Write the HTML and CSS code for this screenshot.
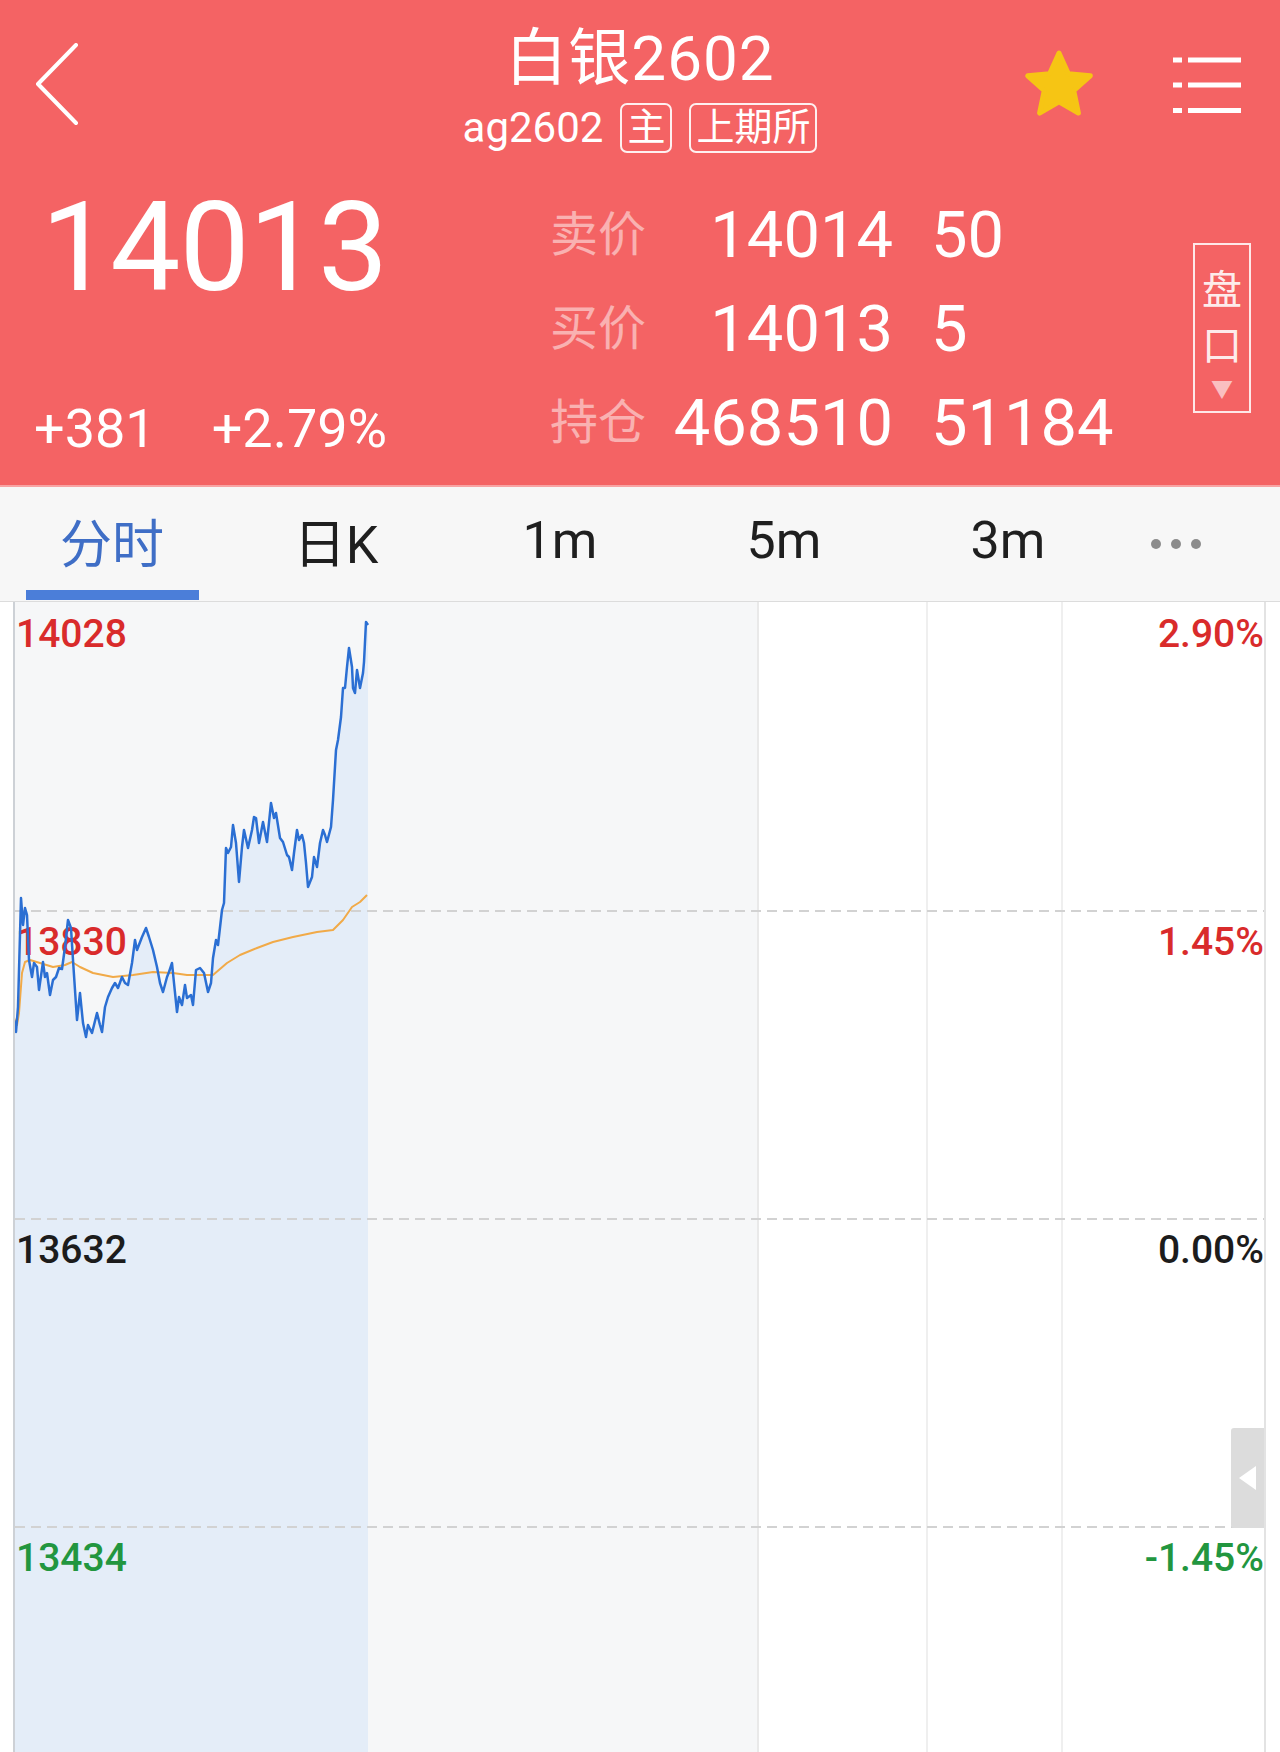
FILE: index.html
```html
<!DOCTYPE html>
<html lang="zh-CN">
<head>
    <meta charset="UTF-8">
    <meta name="viewport" content="width=device-width, initial-scale=1.0">
    <title>白银2602</title>
    <link rel="stylesheet" href="styles.css">
</head>
<body>
    <header class="quote-head">
        <div class="topbar">
            <button class="back" aria-label="返回">
                <svg width="46" height="84" viewBox="0 0 46 84">
                    <path d="M42 2 L4 41 L42 80" fill="none" stroke="#fff" stroke-width="4" stroke-linecap="round" stroke-linejoin="round"/>
                </svg>
            </button>
            <div class="title">
                <h1>白银2602</h1>
                <div class="sub">
                    <span class="code">ag2602</span>
                    <span class="tag">主</span>
                    <span class="tag">上期所</span>
                </div>
            </div>
            <div class="actions">
                <svg class="star" width="76" height="72" viewBox="0 0 24 23">
                    <polygon points="12,1.6 15,8.2 22,8.9 16.7,13.6 18.2,20.8 12,17.2 5.8,20.8 7.3,13.6 2,8.9 9,8.2" fill="#f6c514" stroke="#f6c514" stroke-width="1.6" stroke-linejoin="round"/>
                </svg>
                <svg class="menu" width="68" height="58" viewBox="0 0 68 58">
                    <rect x="0" y="1.5" width="9" height="5" fill="#fff"/>
                    <rect x="15" y="1.5" width="53" height="5" fill="#fff"/>
                    <rect x="0" y="26.5" width="9" height="5" fill="#fff"/>
                    <rect x="15" y="26.5" width="53" height="5" fill="#fff"/>
                    <rect x="0" y="52" width="9" height="5" fill="#fff"/>
                    <rect x="15" y="52" width="53" height="5" fill="#fff"/>
                </svg>
            </div>
        </div>

        <div class="quote">
            <div class="last">
                <div class="price">14013</div>
                <div class="change">
                    <span>+381</span>
                    <span>+2.79%</span>
                </div>
            </div>
            <div class="book">
                <span class="label">卖价</span><span class="num">14014</span><span class="qty">50</span>
                <span class="label">买价</span><span class="num">14013</span><span class="qty">5</span>
                <span class="label">持仓</span><span class="num">468510</span><span class="qty">51184</span>
            </div>
            <div class="depth-btn">
                <span>盘</span>
                <span>口</span>
                <span class="arrow">▼</span>
            </div>
        </div>
    </header>

    <nav class="tabs">
        <a class="tab active">分时</a>
        <a class="tab">日K</a>
        <a class="tab">1m</a>
        <a class="tab">5m</a>
        <a class="tab">3m</a>
        <a class="tab more"><i></i><i></i><i></i></a>
    </nav>

    <section class="chart">
        <svg class="chart-fill" width="1249" height="1150" viewBox="15 602 1249 1150">
            <polygon fill="#e4edf8" points="14,1020 16,1032 18,1007 21,898 23,925 25,908 27,915 29,960 32,977 34,963 37,967 39,990 43,962 45,977 47,973 50,995 53,980 56,977 59,968 62,969 65,947 68,920 71,928 73,960 77,1020 80,993 83,1023 86,1037 88,1025 92,1033 97,1013 100,1025 102,1032 105,1007 108,997 112,988 115,983 118,988 122,977 125,983 128,985 132,963 135,940 137,950 142,937 146,928 149,937 153,950 157,967 160,983 163,992 167,977 169,972 172,963 174,983 177,1012 179,997 182,1005 185,985 187,998 191,995 193,1005 196,970 200,968 204,973 208,992 211,983 213,958 216,940 218,945 222,910 224,903 226,848 228,853 231,847 233,825 236,843 239,882 242,847 244,830 248,848 252,830 254,817 256,818 259,843 263,822 267,842 271,803 274,818 276,813 280,838 283,842 287,855 289,857 292,870 294,853 297,830 299,840 302,835 304,843 306,863 308,887 312,877 314,857 317,867 320,843 323,830 325,835 327,842 331,827 333,800 336,750 338,740 341,717 343,688 345,688 347,667 349,648 352,667 353,688 355,693 357,670 360,688 363,673 364,662 366,622 368,625 368,1752 14,1752"/>
        </svg>

        <div class="band">
            <span class="up">14028</span>
            <span class="up">2.90%</span>
        </div>
        <div class="band dashed">
            <span class="up">13830</span>
            <span class="up">1.45%</span>
        </div>
        <div class="band dashed">
            <span class="flat">13632</span>
            <span class="flat">0.00%</span>
        </div>
        <div class="band dashed">
            <span class="down">13434</span>
            <span class="down">-1.45%</span>
        </div>

        <svg class="chart-lines" width="1249" height="1150" viewBox="15 602 1249 1150">
            <polyline fill="none" stroke="#f1aa48" stroke-width="2" stroke-linejoin="round" points="14,1018 17,1025 19,1013 22,973 25,962 30,960 40,963 53,967 65,965 72,962 80,967 93,973 113,977 133,975 153,972 173,973 187,975 213,975 227,963 240,955 257,948 273,942 293,937 317,932 333,930 343,920 352,907 360,902 367,895"/>
            <polyline fill="none" stroke="#2b6fd3" stroke-width="2.5" stroke-linejoin="round" points="14,1020 16,1032 18,1007 21,898 23,925 25,908 27,915 29,960 32,977 34,963 37,967 39,990 43,962 45,977 47,973 50,995 53,980 56,977 59,968 62,969 65,947 68,920 71,928 73,960 77,1020 80,993 83,1023 86,1037 88,1025 92,1033 97,1013 100,1025 102,1032 105,1007 108,997 112,988 115,983 118,988 122,977 125,983 128,985 132,963 135,940 137,950 142,937 146,928 149,937 153,950 157,967 160,983 163,992 167,977 169,972 172,963 174,983 177,1012 179,997 182,1005 185,985 187,998 191,995 193,1005 196,970 200,968 204,973 208,992 211,983 213,958 216,940 218,945 222,910 224,903 226,848 228,853 231,847 233,825 236,843 239,882 242,847 244,830 248,848 252,830 254,817 256,818 259,843 263,822 267,842 271,803 274,818 276,813 280,838 283,842 287,855 289,857 292,870 294,853 297,830 299,840 302,835 304,843 306,863 308,887 312,877 314,857 317,867 320,843 323,830 325,835 327,842 331,827 333,800 336,750 338,740 341,717 343,688 345,688 347,667 349,648 352,667 353,688 355,693 357,670 360,688 363,673 364,662 366,622 368,625"/>
        </svg>

        <button class="side-tab" aria-label="展开"><i></i></button>
    </section>
</body>
</html>
```

FILE: styles.css
```css
body {
    margin: 0;
    padding: 0;
    font-family: Roboto, "Noto Sans CJK SC", sans-serif;
    background: #fff;
    color: #1c1c1c;
}

button {
    padding: 0;
    border: none;
    background: none;
    cursor: pointer;
}

/* header */

.quote-head {
    height: 485px;
    background: #f46364;
    color: #fff;
    border-bottom: 2px solid #f8a3a3;
}

.topbar {
    display: grid;
    grid-template-columns: 1fr auto 1fr;
    height: 165px;
}

.back {
    justify-self: start;
    align-self: start;
    margin: 43px 0 0 34px;
    line-height: 0;
}

.title {
    display: flex;
    flex-direction: column;
    align-items: center;
    padding-top: 23px;
}

.title h1 {
    margin: 0;
    font-size: 62px;
    font-weight: 400;
    line-height: 72px;
    letter-spacing: 1px;
}

.sub {
    display: flex;
    align-items: center;
    gap: 17px;
    margin-top: 8px;
    font-size: 42px;
    line-height: 50px;
}

.tag {
    height: 50px;
    box-sizing: border-box;
    padding: 0 5px;
    border: 2px solid rgba(255, 255, 255, 0.9);
    border-radius: 7px;
    font-size: 38px;
    line-height: 45px;
}

.actions {
    justify-self: end;
    display: flex;
    align-items: flex-start;
    gap: 76px;
    padding-right: 39px;
}

.star {
    margin-top: 48px;
}

.menu {
    margin-top: 56px;
}

.quote {
    display: flex;
    height: 320px;
    padding-left: 34px;
}

.last {
    width: 516px;
}

.price {
    margin: 20px 0 0 7px;
    font-size: 125px;
    line-height: 1;
    letter-spacing: -1px;
}

.change {
    display: flex;
    gap: 56px;
    margin-top: 92px;
    font-size: 54px;
    line-height: 1;
}

.book {
    display: grid;
    grid-template-columns: 96px 247px auto;
    grid-auto-rows: 94px;
    margin-top: 23px;
    line-height: 94px;
}

.book .label {
    font-size: 48px;
    color: rgba(255, 255, 255, 0.5);
}

.book .num {
    font-size: 65px;
    text-align: right;
}

.book .qty {
    padding-left: 38px;
    font-size: 65px;
}

.depth-btn {
    display: flex;
    flex-direction: column;
    align-items: center;
    width: 58px;
    height: 170px;
    box-sizing: border-box;
    margin: 78px 29px 0 auto;
    padding-top: 18px;
    border: 2px solid rgba(255, 255, 255, 0.85);
    font-size: 40px;
    line-height: 56px;
    color: rgba(255, 255, 255, 0.9);
}

.depth-btn .arrow {
    font-size: 22px;
    line-height: 30px;
    color: rgba(255, 255, 255, 0.6);
}

/* tabs */

.tabs {
    display: grid;
    grid-template-columns: repeat(5, 224px) 112px;
    height: 114px;
    background: #f7f7f7;
    border-bottom: 1px solid #dcdcdc;
}

.tab {
    position: relative;
    display: flex;
    align-items: center;
    justify-content: center;
    padding-bottom: 8px;
    font-size: 52px;
    color: #1f1f1f;
}

.tab.active {
    color: #3f6ec6;
}

.tab.active::after {
    content: "";
    position: absolute;
    left: 26px;
    bottom: 1px;
    width: 173px;
    height: 10px;
    background: #4b7ed9;
}

.tab.more {
    gap: 10px;
    padding-bottom: 0;
}

.tab.more i {
    width: 10px;
    height: 10px;
    border-radius: 50%;
    background: #8c8c8c;
}

/* chart */

.chart {
    position: relative;
    width: 1253px;
    height: 1150px;
    box-sizing: border-box;
    margin-left: 13px;
    overflow: hidden;
    border-left: 2px solid #cdd1d6;
    border-right: 2px solid #e3e3e3;
    background:
        linear-gradient(#e9e9e9, #e9e9e9) 742px 0 / 2px 100% no-repeat,
        linear-gradient(#efefef, #efefef) 911px 0 / 2px 100% no-repeat,
        linear-gradient(#efefef, #efefef) 1046px 0 / 2px 100% no-repeat,
        linear-gradient(#f6f7f8, #f6f7f8) 0 0 / 742px 100% no-repeat,
        #fff;
}

.chart-fill,
.chart-lines {
    position: absolute;
    top: 0;
    left: 0;
}

.band {
    position: relative;
    display: flex;
    justify-content: space-between;
    height: 308px;
    box-sizing: border-box;
    padding: 13px 0 0 1px;
    font-size: 39px;
    font-weight: 500;
    line-height: 1;
}

.band.dashed {
    background: linear-gradient(to right, #d2d2d2 10px, transparent 10px) 0 0 / 16px 2px repeat-x;
}

.up {
    color: #d92b2b;
}

.down {
    color: #22963f;
}

.flat {
    color: #1c1c1c;
}

.side-tab {
    position: absolute;
    top: 826px;
    right: 0;
    display: flex;
    align-items: center;
    justify-content: center;
    width: 33px;
    height: 100px;
    background: #dcdcdc;
    border-radius: 3px 0 0 3px;
}

.side-tab i {
    width: 0;
    height: 0;
    border-top: 12px solid transparent;
    border-bottom: 12px solid transparent;
    border-right: 17px solid #fff;
}
```
